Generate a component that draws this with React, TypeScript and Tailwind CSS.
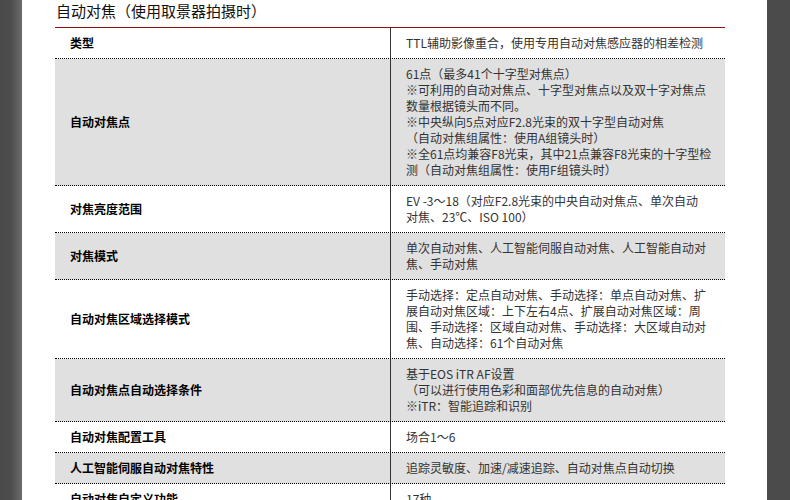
import React from "react";

type Row = { label: string; lines: string[]; gray: boolean };

const rows: Row[] = [
  { label: "类型", lines: ["TTL辅助影像重合，使用专用自动对焦感应器的相差检测"], gray: false },
  {
    label: "自动对焦点",
    lines: [
      "61点（最多41个十字型对焦点）",
      "※可利用的自动对焦点、十字型对焦点以及双十字对焦点",
      "数量根据镜头而不同。",
      "※中央纵向5点对应F2.8光束的双十字型自动对焦",
      "（自动对焦组属性：使用A组镜头时）",
      "※全61点均兼容F8光束，其中21点兼容F8光束的十字型检",
      "测（自动对焦组属性：使用F组镜头时）",
    ],
    gray: true,
  },
  {
    label: "对焦亮度范围",
    lines: ["EV -3～18（对应F2.8光束的中央自动对焦点、单次自动", "对焦、23℃、ISO 100）"],
    gray: false,
  },
  {
    label: "对焦模式",
    lines: ["单次自动对焦、人工智能伺服自动对焦、人工智能自动对", "焦、手动对焦"],
    gray: true,
  },
  {
    label: "自动对焦区域选择模式",
    lines: [
      "手动选择：定点自动对焦、手动选择：单点自动对焦、扩",
      "展自动对焦区域：上下左右4点、扩展自动对焦区域：周",
      "围、手动选择：区域自动对焦、手动选择：大区域自动对",
      "焦、自动选择：61个自动对焦",
    ],
    gray: false,
  },
  {
    label: "自动对焦点自动选择条件",
    lines: ["基于EOS iTR AF设置", "（可以进行使用色彩和面部优先信息的自动对焦）", "※iTR：智能追踪和识别"],
    gray: true,
  },
  { label: "自动对焦配置工具", lines: ["场合1～6"], gray: false },
  { label: "人工智能伺服自动对焦特性", lines: ["追踪灵敏度、加速/减速追踪、自动对焦点自动切换"], gray: true },
  { label: "自动对焦自定义功能", lines: ["17种"], gray: false },
];

export default function App() {
  return (
    <div
      className="flex w-[790px] h-[500px] overflow-hidden bg-white"
      style={{ fontFamily: '"Noto Sans CJK SC", "Noto Sans", sans-serif' }}
    >
      <div className="w-[22px] shrink-0 bg-gradient-to-r from-[#4a4a4a] via-[#4d4d4d] to-[#6c6c6c]" />
      <div className="flex-1 bg-white pl-[33px]">
        <div className="w-[670px]">
          <div className="h-[28px] border-b border-[#8e1010] pl-[1px] text-[15px] leading-[22px] text-[#111]">
            自动对焦（使用取景器拍摄时）
          </div>
          <div className="flex flex-col">
            {rows.map((r, i) => (
              <div
                key={i}
                className={`flex border-b border-dotted border-black ${r.gray ? "bg-[#e0e0e0]" : "bg-white"}`}
              >
                <div className="w-[336px] shrink-0 border-r border-[#333] flex items-center pl-[15px] py-[7px] text-[12px] leading-[16px] font-bold text-black">
                  {r.label}
                </div>
                <div className="flex-1 pl-[15px] py-[7px] text-[12px] leading-[16px] text-[#333]">
                  {r.lines.map((l, j) => (
                    <div key={j} className="whitespace-nowrap">
                      {l}
                    </div>
                  ))}
                </div>
              </div>
            ))}
          </div>
        </div>
      </div>
      <div className="w-[23px] shrink-0 bg-[#4b4b4b]" />
    </div>
  );
}
